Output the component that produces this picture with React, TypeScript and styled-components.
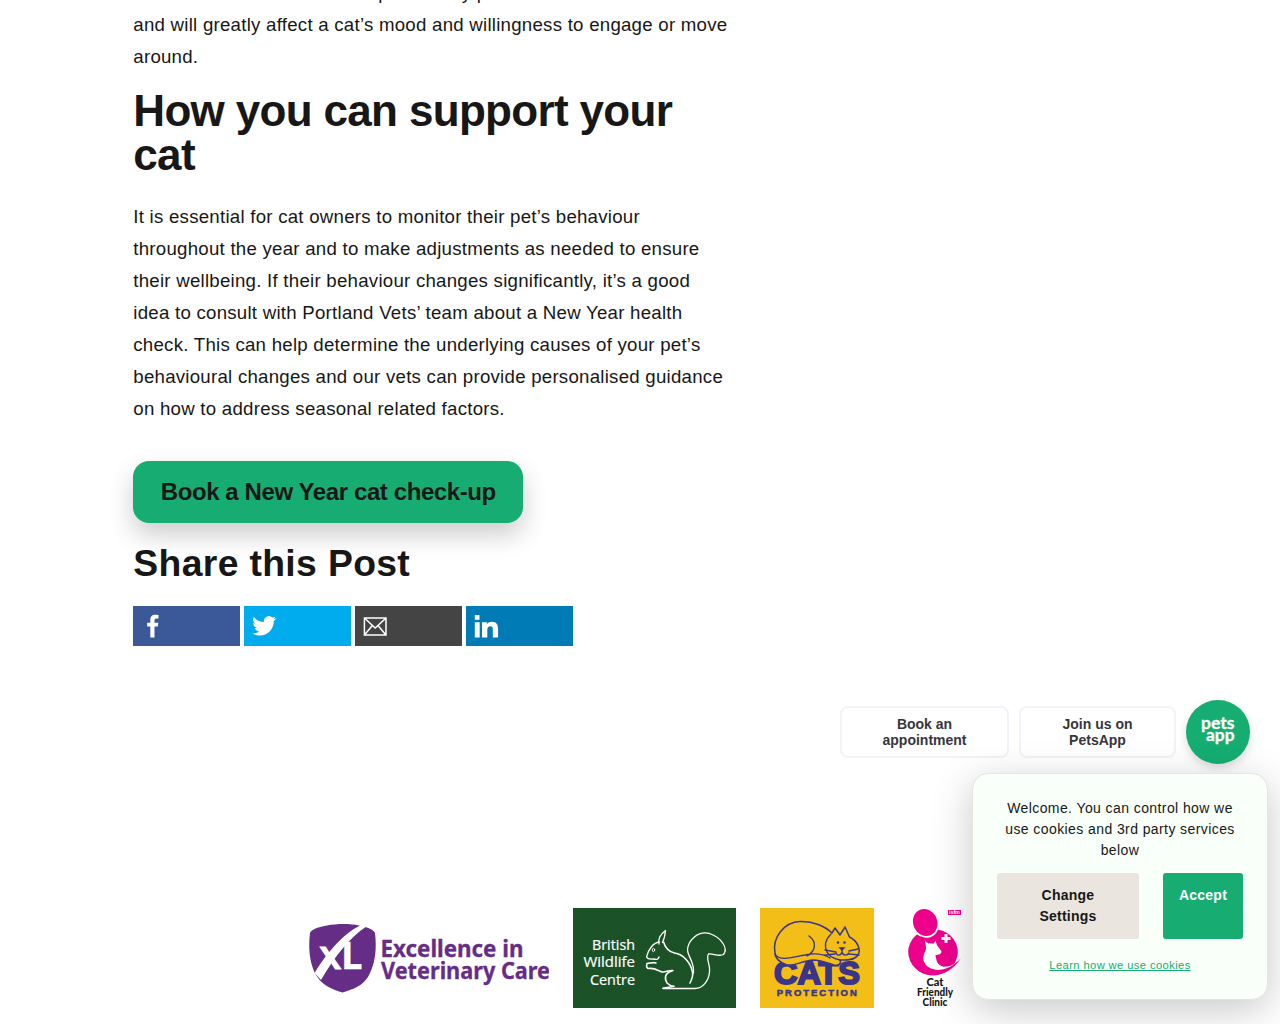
import React from "react";
import styled, { createGlobalStyle } from "styled-components";

const GlobalStyle = createGlobalStyle`
  html, body { margin: 0; padding: 0; background: #fff; overflow: hidden; }
  *, *::before, *::after { box-sizing: border-box; }
  body { font-family: "Liberation Sans", Arial, sans-serif; color: #171717; }
`;

const Page = styled.div`
  position: relative;
  height: 1024px;
  overflow: hidden;
  display: flex;
  flex-direction: column;
`;

const Article = styled.main`
  width: 597px;
  margin-left: 133.3px;
  margin-top: -23px;
  display: flex;
  flex-direction: column;
  align-items: flex-start;
`;

const Paragraph = styled.p`
  margin: 0;
  font-size: 18.67px;
  line-height: 32px;
  letter-spacing: 0.245px;
`;

const Line = styled.span<{ $indent?: number }>`
  display: block;
  white-space: nowrap;
  padding-left: ${(p) => p.$indent ?? 0}px;
`;

const Heading = styled.h2`
  margin: 16px 0 23.6px;
  font-size: 44px;
  line-height: 44px;
  letter-spacing: -0.667px;
`;

const BookButton = styled.a`
  margin-top: 36px;
  width: 390px;
  height: 62px;
  border-radius: 16px;
  background: #17ad72;
  box-shadow: 0 12px 26px rgba(0, 0, 0, 0.2);
  display: flex;
  align-items: center;
  justify-content: center;
  font-size: 24px;
  font-weight: 700;
  letter-spacing: -0.4px;
  white-space: nowrap;
`;

const ShareTitle = styled.h3`
  margin: 18px 0 0;
  font-size: 37.33px;
  line-height: 44px;
  letter-spacing: 0.34px;
`;

const ShareRow = styled.div`
  margin-top: 21px;
  display: flex;
  gap: 4px;
`;

const ShareLink = styled.a<{ $color: string }>`
  width: 107px;
  height: 40px;
  padding-left: 7px;
  background: ${(p) => p.$color};
  display: flex;
  align-items: center;
`;

const Logos = styled.footer`
  margin-top: 262.4px;
  padding-left: 309px;
  display: flex;
  align-items: flex-start;
  gap: 24px;
  svg { display: block; flex: none; }
`;

const ChatBar = styled.aside`
  position: absolute;
  top: 700px;
  right: 30px;
  display: flex;
  align-items: center;
  gap: 10px;
`;

const ChatButton = styled.button<{ $width: number }>`
  width: ${(p) => p.$width}px;
  height: 52px;
  padding: 0 36px;
  border: 2px solid #f2f2f8;
  border-radius: 8px;
  background: #fff;
  color: #36363b;
  font: 700 14px/16px "Liberation Sans", Arial, sans-serif;
  letter-spacing: 0;
`;

const ChatCircle = styled.div`
  width: 64px;
  height: 64px;
  border-radius: 50%;
  background: #15ad72;
  box-shadow: 0 4px 10px rgba(0, 0, 0, 0.15);
`;

const CookieCard = styled.section`
  position: absolute;
  left: 972px;
  top: 773px;
  width: 296px;
  height: 227px;
  padding: 24px;
  border: 1px solid #e9e4dc;
  border-radius: 16px;
  background: #f9fff9;
  box-shadow: 0 10px 40px rgba(0, 0, 0, 0.22);
  display: flex;
  flex-direction: column;
  align-items: center;
`;

const CookieText = styled.p`
  margin: 0;
  width: 246px;
  text-align: center;
  font-size: 14px;
  line-height: 21px;
  letter-spacing: 0.41px;
`;

const CookieActions = styled.div`
  margin-top: 12px;
  width: 246px;
  display: flex;
  justify-content: space-between;
`;

const CookieButton = styled.button<{ $primary?: boolean }>`
  width: ${(p) => (p.$primary ? 80 : 142)}px;
  height: 66px;
  padding: 12px ${(p) => (p.$primary ? 10 : 36)}px;
  display: flex;
  justify-content: center;
  align-items: flex-start;
  border: 0;
  border-radius: 3px;
  background: ${(p) => (p.$primary ? "#17ad72" : "#eae5de")};
  color: ${(p) => (p.$primary ? "#fff" : "#171717")};
  font: 700 14px/21px "Liberation Sans", Arial, sans-serif;
  letter-spacing: 0.24px;
`;

const CookieLink = styled.a`
  margin-top: 17px;
  font-size: 11.2px;
  line-height: 18px;
  letter-spacing: 0.4px;
  color: #17ad72;
  text-decoration: underline;
`;

const FacebookIcon = () => (
  <svg width="26" height="26" viewBox="0 0 26 26" fill="#fff">
    <path d="M10.3 24.5V13.6H7.2V9.8h3.1V6.6c0-3.1 1.8-4.8 4.6-4.8 1.3 0 2.5.1 3.6.2v3.6h-2c-1.6 0-2 .8-2 2v2.2h3.8l-.5 3.8h-3.3v10.9z" />
  </svg>
);

const TwitterIcon = () => (
  <svg width="26" height="26" viewBox="0 0 26 26">
    <path transform="translate(1.2 .8)" fill="#fff" d="M23.95 4.57a10 10 0 0 1-2.82.77 4.96 4.96 0 0 0 2.16-2.72c-.95.55-2 .95-3.13 1.18a4.92 4.92 0 0 0-8.38 4.48C7.69 8.1 4.07 6.13 1.64 3.16a4.92 4.92 0 0 0 1.52 6.57 4.9 4.9 0 0 1-2.23-.61v.06c0 2.39 1.7 4.38 3.95 4.83a5 5 0 0 1-2.21.08 4.94 4.94 0 0 0 4.6 3.42A9.87 9.87 0 0 1 0 19.54a13.99 13.99 0 0 0 7.56 2.21c9.05 0 14-7.5 14-13.98 0-.21 0-.42-.02-.63a9.94 9.94 0 0 0 2.46-2.55z" />
  </svg>
);

const MailIcon = () => (
  <svg width="26" height="26" viewBox="0 0 26 26" fill="none" stroke="#fff" strokeWidth="1.5">
    <path d="M2.400 5h21.600v17H2.400zM2.400 5l10.800 10L24 5M2.400 22l8-9.600M24 22l-8-9.600" />
  </svg>
);

const LinkedInIcon = () => (
  <svg width="26" height="26" viewBox="0 0 26 26" fill="#fff">
    <path d="M1.800 9.200h4.900v15.300H1.800zM1.800 2h4.700v4.700H1.800zM9 9.200h4.900v2.100c.8-1.400 2.400-2.500 4.800-2.500 4.800 0 6.400 2.700 6.400 7.300v8.400h-5.300v-7.600c0-2.600-.5-3.700-2.400-3.700s-3.100 1.200-3.100 3.700v7.600H9z" />
  </svg>
);

const ChatLogo = () => (
  <svg width="64" height="64" viewBox="0 0 64 64" fill="#fff" stroke="#fff" strokeWidth=".3" fontFamily="Lato, Inter, sans-serif" fontWeight="700" fontSize="17">
    <text x="15" y="29.300" textLength="33.500" lengthAdjust="spacingAndGlyphs">pets</text>
    <text x="20" y="41.300" textLength="28.500" lengthAdjust="spacingAndGlyphs">app</text>
  </svg>
);

const ExcellenceLogo = () => (
  <svg width="240" height="100" viewBox="0 0 240 100">
    <path fill="#652d86" d="M1 25C2 22 8 19 18 17.500C28 15.500 42 15.500 50 17.500C59 19 65 22 66 25C68 42 66 57 59 69C53 78 45 81 33.500 84.500C22 81 13 77 7 67C1 56-1 42 1 25z" />
    <path fill="#fff" d="M5.500 65C16 48 32 27 51 17.500L57.500 18.500C41 29 26 48 12 72z" />
    <g fill="#fff" stroke="#fff" fontFamily="Open Sans, sans-serif" fontWeight="700">
      <text x="10.500" y="60.500" fontSize="30" strokeWidth=".8" textLength="21.500" lengthAdjust="spacingAndGlyphs">X</text>
      <text x="32" y="60.500" fontSize="38" strokeWidth=".4">L</text>
    </g>
    <g fontFamily="Noto Sans, sans-serif" fontWeight="700" fontSize="22.500" fill="#652d86" stroke="#652d86" strokeWidth=".3">
      <text x="71.500" y="49" textLength="143" lengthAdjust="spacingAndGlyphs">Excellence in</text>
      <text x="72" y="71" textLength="169" lengthAdjust="spacingAndGlyphs">Veterinary Care</text>
    </g>
  </svg>
);

const WildlifeLogo = () => (
  <svg width="163" height="100" viewBox="0 0 163 100">
    <defs>
      <pattern id="weave" width="4" height="4" patternUnits="userSpaceOnUse">
        <path d="M0 1h2M2 3h2" stroke="#174820" strokeWidth="1" />
      </pattern>
    </defs>
    <path fill="#1c5428" d="M0 0h163v100H0z" />
    <path fill="url(#weave)" opacity=".6" d="M0 0h163v100H0z" />
    <g fill="#fff" fontFamily="Open Sans, sans-serif" fontSize="14.500" stroke="#fff" strokeWidth=".2">
      <text x="19" y="41.500" textLength="43" lengthAdjust="spacingAndGlyphs">British</text>
      <text x="10.500" y="59" textLength="51.500" lengthAdjust="spacingAndGlyphs">Wildlife</text>
      <text x="17" y="76.500" textLength="45" lengthAdjust="spacingAndGlyphs">Centre</text>
    </g>
    <g fill="none" stroke="#fff" strokeWidth="1.300" strokeLinecap="round" strokeLinejoin="round">
      <path d="M86 36c-1-6 1-9 6.500-13.500-.5 5-1 8-3 12" />
      <path d="M86 34c-6 1-11 8-12.500 15 1 2 3 2.500 7 2 4 1 5 0 5.500-2" />
      <path strokeWidth="1.600" d="M83 55c-2-1-5 0-9 .5-1 3 0 5 2 5 5-1 9 2 13 3.500 4 .5 6-2 11-1.500" />
      <path strokeWidth="1.600" d="M99 63c-7 2-8 7-5 12 2 2 4 3 7 3.300l-11 2" />
      <path strokeWidth="1.600" d="M90.500 34c2 6 6 10 11 11 9 1 16 10 18 19 1 4-1 8-2.500 11" />
      <path d="M90 80.500h32c8 0 14-8 14.500-17 1-7-4-13-1-17.500 4-1 10 3 15 .5 5-6-2-17-14-21-12-3-21 7-22 15.500-.5 7 7 12 6 24" />
      <ellipse cx="80.500" cy="42" rx="1.200" ry="1.600" strokeWidth=".9" />
    </g>
  </svg>
);

const CatsLogo = () => (
  <svg width="114" height="100" viewBox="0 0 114 100">
    <path fill="#f4be18" d="M0 0h114v100H0z" />
    <g fill="#3b3589" fontFamily="Liberation Sans, Arial, sans-serif" fontWeight="700">
      <text x="14" y="75.500" fontSize="32" stroke="#3b3589" strokeWidth="2" textLength="86" lengthAdjust="spacingAndGlyphs">CATS</text>
      <text x="16.800" y="87.500" fontSize="9.500" stroke="#3b3589" strokeWidth=".5" textLength="80" lengthAdjust="spacing">PROTECTION</text>
    </g>
    <path fill="#f4be18" stroke="#3b3589" strokeWidth="1.500" strokeLinejoin="round" d="M15 45C12 30 24 14 40 13.500C53 13 65 18 72 25L75 20L80 27L85 19L89.500 29C98 33 101 42 98 47C94 53 85 52 80 52C82 56 78 58 74 57C68 55 60 52 53 52C42 53 35 58 27 57C20 55 15 50 15 45z" />
    <g fill="none" stroke="#3b3589" strokeWidth="1.400" strokeLinecap="round">
      <path d="M49 28c8 6 7 15-2 20M15 46c5 8 18 3 30 1 9-2 19-1 25 3M71 26c-6 6-7 12-4 18 2 5 8 7 13 8M82 40v4c-1 4-5 4-6 1M82 44c1 4 5 4 7 1M65 42l11 2M65 47l10-1M89 43l9-2M89 46l10 1" />
      <path d="M80 40h4l-2 2z" fill="#3b3589" />
      <circle cx="78" cy="34.500" r=".6" /><circle cx="84.500" cy="34.500" r=".6" />
    </g>
  </svg>
);

const ClinicLogo = () => (
  <svg width="64" height="100" viewBox="0 0 64 100">
    <g fill="#ec008c">
      <ellipse cx="35" cy="44" rx="24.800" ry="23" />
      <path d="M16 58C26 73 51 70 63 50C55 59 46 62 37 61z" />
    </g>
    <ellipse cx="27.200" cy="14.800" rx="13.600" ry="15.200" transform="rotate(-22 27.200 14.800)" fill="#fff" />
    <ellipse cx="27.200" cy="14.500" rx="12" ry="13.800" transform="rotate(-22 27.200 14.500)" fill="#ec008c" />
    <path fill="#ec008c" d="M50 2h13v5H50z" />
    <path fill="#fff" d="M27 33l3.500 2.500c2-.5 3 0 5 .3l2-3 1.500 4.500 4.500 6c0 3-3 3.500-6 4 1 6 2 10 8 11.500 8 0 12-3 17.500-9C56 58 48 62 39 62 29 61 24 54 25.500 48c1-4 3-6 2.500-9zM46.500 26h3v3h3v3h-3v3h-3v-3h-3v-3h3z" />
    <text x="51" y="6.400" fill="#fff" fontFamily="Liberation Sans, sans-serif" fontWeight="700" fontSize="5.500" textLength="11">isfm</text>
    <g fill="#171717" fontFamily="Lato, Inter, sans-serif" fontWeight="900" fontSize="10.500" textAnchor="middle">
      <text x="37" y="78" textLength="17" lengthAdjust="spacingAndGlyphs">Cat</text>
      <text x="37" y="88" textLength="36" lengthAdjust="spacingAndGlyphs">Friendly</text>
      <text x="37" y="98" textLength="25" lengthAdjust="spacingAndGlyphs">Clinic</text>
    </g>
  </svg>
);

export default function App() {
  return (
    <>
      <GlobalStyle />
      <Page>
        <Article>
          <Paragraph>
            <Line $indent={245}>particularly painful</Line>
            <Line>and will greatly affect a cat’s mood and willingness to engage or move</Line>
            <Line>around.</Line>
          </Paragraph>
          <Heading>How you can support your cat</Heading>
          <Paragraph>
            <Line>It is essential for cat owners to monitor their pet’s behaviour</Line>
            <Line>throughout the year and to make adjustments as needed to ensure</Line>
            <Line>their wellbeing. If their behaviour changes significantly, it’s a good</Line>
            <Line>idea to consult with Portland Vets’ team about a New Year health</Line>
            <Line>check. This can help determine the underlying causes of your pet’s</Line>
            <Line>behavioural changes and our vets can provide personalised guidance</Line>
            <Line>on how to address seasonal related factors.</Line>
          </Paragraph>
          <BookButton>Book a New Year cat check-up</BookButton>
          <ShareTitle>Share this Post</ShareTitle>
          <ShareRow>
            <ShareLink $color="#3b5998"><FacebookIcon /></ShareLink>
            <ShareLink $color="#00acee"><TwitterIcon /></ShareLink>
            <ShareLink $color="#444444"><MailIcon /></ShareLink>
            <ShareLink $color="#007bb6"><LinkedInIcon /></ShareLink>
          </ShareRow>
        </Article>
        <Logos>
          <ExcellenceLogo />
          <WildlifeLogo />
          <CatsLogo />
          <ClinicLogo />
        </Logos>
        <ChatBar>
          <ChatButton $width={169}>Book an appointment</ChatButton>
          <ChatButton $width={157}>Join us on PetsApp</ChatButton>
          <ChatCircle><ChatLogo /></ChatCircle>
        </ChatBar>
        <CookieCard>
          <CookieText>Welcome. You can control how we use cookies and 3rd party services below</CookieText>
          <CookieActions>
            <CookieButton>Change Settings</CookieButton>
            <CookieButton $primary>Accept</CookieButton>
          </CookieActions>
          <CookieLink>Learn how we use cookies</CookieLink>
        </CookieCard>
      </Page>
    </>
  );
}
